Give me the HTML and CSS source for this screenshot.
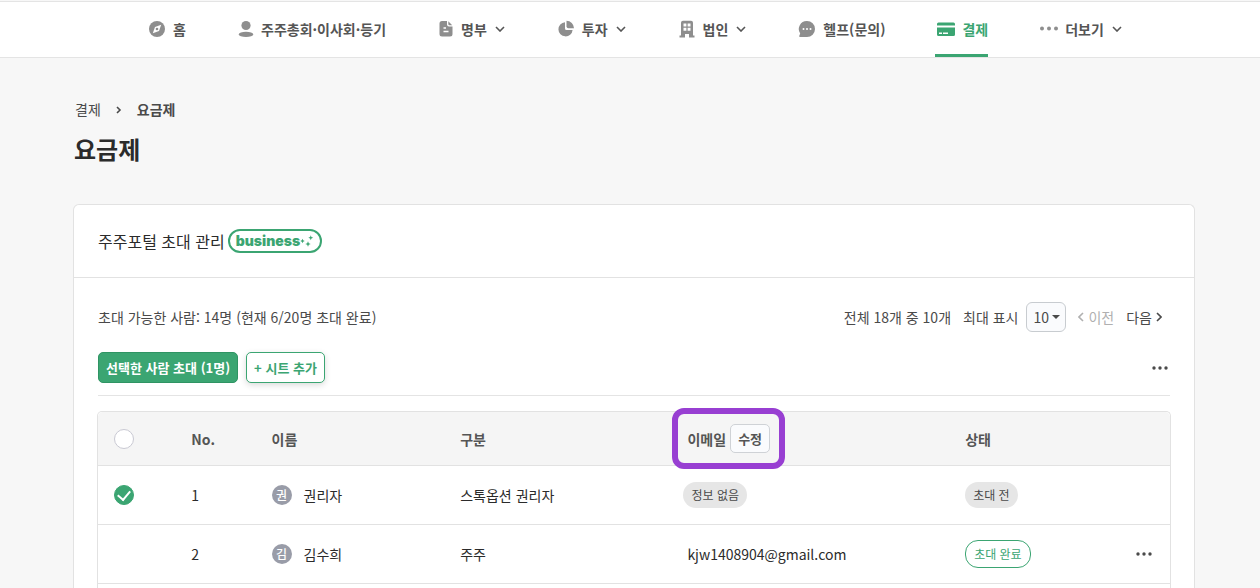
FILE: index.html
```html
<!DOCTYPE html>
<html lang="ko">
<head>
  <meta charset="UTF-8">
  <title>요금제</title>
  <link rel="stylesheet" href="styles.css">
</head>
<body>

  <nav class="nav">
    <a class="nav-item" href="#">
      <svg class="icon" width="18" height="18" viewBox="0 0 18 18"><circle cx="9" cy="9" r="8" fill="currentColor"/><path d="M13.2 4.8 11 11 4.8 13.2 7 7z" fill="#fff"/><circle cx="9" cy="9" r="1.3" fill="currentColor"/></svg>
      <span>홈</span>
    </a>
    <a class="nav-item" href="#">
      <svg class="icon" width="16" height="18" viewBox="0 0 16 18"><circle cx="8" cy="5.5" r="4.6" fill="currentColor"/><ellipse cx="8" cy="14.4" rx="7.2" ry="2.6" fill="currentColor"/></svg>
      <span>주주총회·이사회·등기</span>
    </a>
    <a class="nav-item" href="#">
      <svg class="icon" width="16" height="18" viewBox="0 0 16 18"><path d="M4 1h5v3.500a2 2 0 0 0 2 2h3.500V14a2.500 2.500 0 0 1-2.500 2.500H4A2.500 2.500 0 0 1 1.500 14V3.500A2.500 2.500 0 0 1 4 1z" fill="currentColor"/><path d="M10.300 1.200 14.200 5.200h-2.700a1.200 1.200 0 0 1-1.200-1.200z" fill="currentColor"/><path d="M5.500 8h2.500M5.500 11.500h5" stroke="#fff" stroke-width="1.400"/></svg>
      <span>명부</span>
      <svg class="chevron" width="10" height="6" viewBox="0 0 10 6"><path d="M1 1l4 4 4-4"/></svg>
    </a>
    <a class="nav-item" href="#">
      <svg class="icon" width="18" height="18" viewBox="0 0 18 18"><path d="M8 2.200V8.500a1.500 1.500 0 0 0 1.500 1.500h6.100A7.100 7.100 0 1 1 8 2.200z" fill="currentColor"/><path d="M9.500 .800A7.500 7.500 0 0 1 17 8.200H11.500A2 2 0 0 1 9.500 6.200z" fill="currentColor"/></svg>
      <span>투자</span>
      <svg class="chevron" width="10" height="6" viewBox="0 0 10 6"><path d="M1 1l4 4 4-4"/></svg>
    </a>
    <a class="nav-item" href="#">
      <svg class="icon" width="18" height="18" viewBox="0 0 18 18"><path d="M3 2.800A2 2 0 0 1 5 .800h8a2 2 0 0 1 2 2V15.500H16.500V17.500H11v-3.500H7v3.500H1.500V15.500H3z" fill="currentColor"/><path d="M5.500 3.500h2.900v3H5.500zM9.600 3.500h2.900v3H9.600zM5.500 7.800h2.900v3H5.500zM9.600 7.800h2.900v3H9.600z" fill="#fff"/></svg>
      <span>법인</span>
      <svg class="chevron" width="10" height="6" viewBox="0 0 10 6"><path d="M1 1l4 4 4-4"/></svg>
    </a>
    <a class="nav-item" href="#">
      <svg class="icon" width="18" height="18" viewBox="0 0 18 18"><path d="M9 1a8 8 0 1 1 0 16H2.200a1 1 0 0 1-.800-1.500l.800-2A8 8 0 0 1 9 1z" fill="currentColor"/><g fill="#fff"><circle cx="5.500" cy="9" r="1"/><circle cx="9" cy="9" r="1"/><circle cx="12.500" cy="9" r="1"/></g></svg>
      <span>헬프(문의)</span>
    </a>
    <a class="nav-item active" href="#">
      <svg class="icon" width="18" height="18" viewBox="0 0 18 18"><path d="M1.500 2.500h15A1.500 1.500 0 0 1 18 4v1.500H0V4a1.500 1.500 0 0 1 1.500-1.500zM0 7.500h18v7a1.500 1.500 0 0 1-1.500 1.500h-15A1.500 1.500 0 0 1 0 14.500z" fill="currentColor"/><path d="M2 13.200h3M6 13.200h5" stroke="#fff" stroke-width="1.500"/></svg>
      <span>결제</span>
    </a>
    <a class="nav-item" href="#">
      <svg class="icon" width="18" height="18" viewBox="0 0 18 18" fill="currentColor"><circle cx="2" cy="8.500" r="2"/><circle cx="9" cy="8.500" r="2"/><circle cx="16" cy="8.500" r="2"/></svg>
      <span>더보기</span>
      <svg class="chevron" width="10" height="6" viewBox="0 0 10 6"><path d="M1 1l4 4 4-4"/></svg>
    </a>
  </nav>

  <main class="page">
    <div class="breadcrumb">
      <a href="#">결제</a>
      <svg width="6" height="8" viewBox="0 0 6 8"><path d="M1 1l3 3-3 3"/></svg>
      <strong>요금제</strong>
    </div>
    <h1>요금제</h1>

    <section class="card">
      <header class="card-header">
        <h2>주주포털 초대 관리</h2>
        <span class="plan">business
          <svg width="14" height="14" viewBox="0 0 14 14" fill="currentColor"><path d="M2.500 4.800l.7 1.500 1.500.7-1.500.7-.7 1.500-.7-1.500L.3 7l1.500-.7zM8 7.300l.8 1.900 1.900.8-1.900.8L8 12.700l-.8-1.900-1.900-.8 1.900-.8zM10.800 1.200l.6 1.800 1.800.8-1.800.6-.6 1.800-.7-1.800-1.800-.6 1.800-.8z"/></svg>
        </span>
      </header>

      <div class="card-body">
        <div class="info">
          <span>초대 가능한 사람: 14명 (현재 6/20명 초대 완료)</span>
          <div class="paging">
            <span>전체 18개 중 10개</span>
            <div class="page-size">
              <label for="pageSize">최대 표시</label>
              <div class="select">
                <select id="pageSize">
                  <option>10</option>
                </select>
              </div>
            </div>
            <button class="page-btn" disabled><svg width="6" height="10" viewBox="0 0 6 10"><path d="M5 1L1 5l4 4"/></svg>이전</button>
            <button class="page-btn">다음<svg width="6" height="10" viewBox="0 0 6 10"><path d="M1 1l4 4-4 4"/></svg></button>
          </div>
        </div>

        <div class="toolbar">
          <button class="btn btn-primary">선택한 사람 초대 (1명)</button>
          <button class="btn btn-outline">+ 시트 추가</button>
          <button class="more" aria-label="더보기"><svg width="16" height="4" viewBox="0 0 16 4"><circle cx="2" cy="2" r="1.700"/><circle cx="8" cy="2" r="1.700"/><circle cx="14" cy="2" r="1.700"/></svg></button>
        </div>

        <div class="table-wrap">
          <table>
            <colgroup>
              <col class="col-check">
              <col class="col-no">
              <col class="col-name">
              <col class="col-type">
              <col class="col-email">
              <col class="col-status">
              <col>
            </colgroup>
            <thead>
              <tr>
                <th><input class="check" type="checkbox" aria-label="전체 선택"></th>
                <th>No.</th>
                <th>이름</th>
                <th>구분</th>
                <th><div class="email-head">이메일<button class="edit">수정</button></div></th>
                <th>상태</th>
                <th></th>
              </tr>
            </thead>
            <tbody>
              <tr>
                <td><input class="check" type="checkbox" aria-label="권리자 선택" checked></td>
                <td>1</td>
                <td><div class="person"><span class="avatar">권</span>권리자</div></td>
                <td>스톡옵션 권리자</td>
                <td class="no-email"><span class="badge">정보 없음</span></td>
                <td><span class="badge">초대 전</span></td>
                <td></td>
              </tr>
              <tr>
                <td></td>
                <td>2</td>
                <td><div class="person"><span class="avatar">김</span>김수희</div></td>
                <td>주주</td>
                <td>kjw1408904@gmail.com</td>
                <td><span class="badge badge-done">초대 완료</span></td>
                <td><button class="more" aria-label="더보기"><svg width="16" height="4" viewBox="0 0 16 4"><circle cx="2" cy="2" r="1.700"/><circle cx="8" cy="2" r="1.700"/><circle cx="14" cy="2" r="1.700"/></svg></button></td>
              </tr>
            </tbody>
          </table>
        </div>
      </div>
    </section>
  </main>

</body>
</html>
```
FILE: styles.css
```css
* {
  box-sizing: border-box;
}
body {
  display: flex;
  flex-direction: column;
  min-height: 100vh;
  margin: 0;
  background: #f7f7f7;
  color: #4a4a4a;
  font-family: "Noto Sans CJK KR", sans-serif;
  font-size: 14px;
  line-height: 20px;
}
a {
  color: inherit;
  text-decoration: none;
}
button, select {
  font: inherit;
  color: inherit;
  cursor: pointer;
}
svg {
  flex: none;
}

/* Navigation */
.nav {
  display: flex;
  justify-content: center;
  gap: 50px;
  height: 57px;
  margin-top: 1px;
  padding-left: 8px;
  background: #fff;
  border-top: 1px solid #e4e4e4;
  border-bottom: 1px solid #e4e4e4;
}
.nav-item {
  display: flex;
  align-items: center;
  gap: 7px;
  padding: 1px 0 0 2px;
  color: #555;
  font-weight: 700;
  white-space: nowrap;
  border-bottom: 3px solid transparent;
}
.nav-item .icon {
  color: #8e8e8e;
}
.nav-item.active {
  color: #3ba572;
  border-color: #3ba572;
}
.nav-item.active .icon {
  color: #3ba572;
}
.chevron, .breadcrumb svg, .page-btn svg {
  fill: none;
  stroke: currentColor;
  stroke-width: 1.6;
}
.chevron {
  margin-left: 1px;
}

/* Page head */
.page {
  flex: 1;
  display: flex;
  flex-direction: column;
  padding: 41px 65px 0 73px;
}
.breadcrumb {
  display: flex;
  align-items: center;
  gap: 15px;
  padding-left: 2px;
}
.breadcrumb svg {
  margin-top: 2px;
}
h1 {
  margin: 13px 0 38px 1px;
  color: #2b2b2b;
  font-size: 24px;
  line-height: 34px;
}

/* Card */
.card {
  flex: 1;
  display: flex;
  flex-direction: column;
  background: #fff;
  border: 1px solid #e2e2e2;
  border-bottom: 0;
  border-radius: 6px 6px 0 0;
}
.card-header {
  display: flex;
  align-items: center;
  gap: 3px;
  padding: 24px;
  border-bottom: 1px solid #e2e2e2;
}
h2 {
  margin: 0;
  color: #2b2b2b;
  font-size: 16px;
  font-weight: 400;
  line-height: 24px;
}
.plan {
  display: flex;
  align-items: center;
  height: 24px;
  padding: 0 6px;
  color: #3ba572;
  border: 2px solid #3ba572;
  border-radius: 12px;
  font-family: Inter, sans-serif;
  font-size: 14px;
  font-weight: 900;
}
.card-body {
  flex: 1;
  display: flex;
  flex-direction: column;
  padding: 24px 24px 0;
}
.info {
  display: flex;
  align-items: center;
  justify-content: space-between;
}
.paging {
  display: flex;
  align-items: center;
  gap: 12px;
  padding-right: 8px;
}
.page-size {
  display: flex;
  align-items: center;
  gap: 8px;
}
.select {
  position: relative;
}
.select::after {
  content: "";
  position: absolute;
  top: 13px;
  right: 6px;
  border: 4px solid transparent;
  border-top-color: #4a4a4a;
  border-bottom: 0;
  pointer-events: none;
}
select {
  display: block;
  width: 40px;
  height: 30px;
  padding: 0 6px;
  background: #fafbfd;
  border: 1px solid #c8ccd0;
  border-radius: 6px;
  appearance: none;
}
.page-btn {
  display: flex;
  align-items: center;
  gap: 4px;
  padding: 0;
  background: none;
  border: 0;
}
.page-btn:disabled {
  color: #b0b0b0;
}

/* Buttons */
.toolbar {
  display: flex;
  align-items: center;
  gap: 8px;
  padding: 20px 0 12px;
  border-bottom: 1px solid #e4e4e4;
}
.btn {
  height: 31px;
  padding: 0 7px;
  border: 1px solid #3ba572;
  border-radius: 5px;
  font-size: 13px;
  font-weight: 700;
}
.btn-primary {
  color: #fff;
  background: #3ba572;
  border-color: #2f9463;
}
.btn-outline {
  color: #3ba572;
  background: #fff;
  box-shadow: 0 2px 6px rgba(0, 0, 0, 0.15);
}
.more {
  display: flex;
  margin-left: auto;
  padding: 8px 2px;
  background: none;
  border: 0;
  fill: #4a4a4a;
}

/* Table */
.table-wrap {
  flex: 1;
  margin: 15px -1px 0;
  border: 1px solid #e2e2e2;
  border-bottom: 0;
  border-radius: 5px 5px 0 0;
}
table {
  width: 100%;
  table-layout: fixed;
  border-collapse: separate;
  border-spacing: 0;
}
.col-check {
  width: 7.2%;
}
.col-no {
  width: 7.5%;
}
.col-name {
  width: 17.6%;
}
.col-type {
  width: 21.2%;
}
.col-email {
  width: 25.9%;
}
.col-status {
  width: 14.1%;
}
th, td {
  height: 59px;
  padding: 0 16px;
  text-align: left;
  border-bottom: 1px solid #e2e2e2;
}
th {
  height: 54px;
  color: #555;
  background: #f5f5f5;
  font-weight: 700;
}
th:first-child {
  border-top-left-radius: 5px;
}
th:last-child {
  border-top-right-radius: 5px;
}
td {
  color: #2b2b2b;
}
.check {
  display: grid;
  place-content: center;
  width: 20px;
  height: 20px;
  margin: 0;
  background: #fff;
  border: 1px solid #c9c9d3;
  border-radius: 50%;
  appearance: none;
}
.check:checked {
  background: #3ba572;
  border-color: #3ba572;
}
.check:checked::after {
  content: "";
  width: 6px;
  height: 10px;
  margin-bottom: 2px;
  border: solid #fff;
  border-width: 0 2px 2px 0;
  transform: rotate(40deg);
}
.person {
  display: flex;
  align-items: center;
  gap: 12px;
}
.avatar {
  width: 20px;
  height: 20px;
  color: #fff;
  background: #999ca8;
  border-radius: 50%;
  font-size: 12px;
  font-weight: 500;
  text-align: center;
}
.email-head {
  position: relative;
  display: inline-flex;
  align-items: center;
  gap: 4px;
  vertical-align: middle;
}
.email-head::before {
  content: "";
  position: absolute;
  inset: -16px -15px;
  border: 6px solid #983fd2;
  border-radius: 12px;
  pointer-events: none;
}
.edit {
  height: 29px;
  padding: 0 7px;
  background: #fafbfd;
  border: 1px solid #cfd2d6;
  border-radius: 5px;
  font-size: 13px;
  font-weight: 700;
}
.no-email {
  padding-left: 12px;
}
.badge {
  display: inline-block;
  padding: 3px 8px;
  color: #4a4a4a;
  background: #e6e6e6;
  border-radius: 13px;
  font-size: 12px;
}
.badge-done {
  color: #3ba572;
  background: #fff;
  border: 1px solid #3ba572;
}
```
